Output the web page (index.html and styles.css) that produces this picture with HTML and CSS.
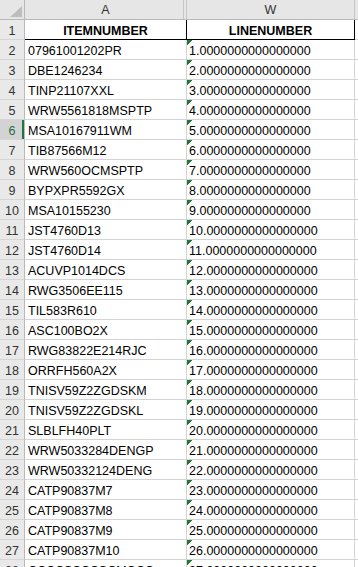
FILE: index.html
```html
<!DOCTYPE html>
<html>
<head>
<meta charset="utf-8">
<link rel="stylesheet" href="styles.css">
</head>
<body>
<div class="sheet">
  <div class="corner"><svg width="24" height="19" viewBox="0 0 24 19"><polygon points="22,6 22,17 10,17" fill="#bdbdbd"/></svg></div>
  <div class="ch ch-a">A</div>
  <div class="ch">W</div>
  <div class="ch ch-x"></div>

  <div class="rh">1</div><div class="c hd hd-a">ITEMNUMBER</div><div class="c hd hd-w">LINENUMBER</div><div class="c x"></div>
  <div class="rh">2</div><div class="c">07961001202PR</div><div class="c w">1.0000000000000000</div><div class="c x"></div>
  <div class="rh">3</div><div class="c">DBE1246234</div><div class="c w">2.0000000000000000</div><div class="c x"></div>
  <div class="rh">4</div><div class="c">TINP21107XXL</div><div class="c w">3.0000000000000000</div><div class="c x"></div>
  <div class="rh">5</div><div class="c">WRW5561818MSPTP</div><div class="c w">4.0000000000000000</div><div class="c x"></div>
  <div class="rh sel">6</div><div class="c">MSA10167911WM</div><div class="c w">5.0000000000000000</div><div class="c x"></div>
  <div class="rh">7</div><div class="c">TIB87566M12</div><div class="c w">6.0000000000000000</div><div class="c x"></div>
  <div class="rh">8</div><div class="c">WRW560OCMSPTP</div><div class="c w">7.0000000000000000</div><div class="c x"></div>
  <div class="rh">9</div><div class="c">BYPXPR5592GX</div><div class="c w">8.0000000000000000</div><div class="c x"></div>
  <div class="rh">10</div><div class="c">MSA10155230</div><div class="c w">9.0000000000000000</div><div class="c x"></div>
  <div class="rh">11</div><div class="c">JST4760D13</div><div class="c w">10.0000000000000000</div><div class="c x"></div>
  <div class="rh">12</div><div class="c">JST4760D14</div><div class="c w">11.0000000000000000</div><div class="c x"></div>
  <div class="rh">13</div><div class="c">ACUVP1014DCS</div><div class="c w">12.0000000000000000</div><div class="c x"></div>
  <div class="rh">14</div><div class="c">RWG3506EE115</div><div class="c w">13.0000000000000000</div><div class="c x"></div>
  <div class="rh">15</div><div class="c">TIL583R610</div><div class="c w">14.0000000000000000</div><div class="c x"></div>
  <div class="rh">16</div><div class="c">ASC100BO2X</div><div class="c w">15.0000000000000000</div><div class="c x"></div>
  <div class="rh">17</div><div class="c">RWG83822E214RJC</div><div class="c w">16.0000000000000000</div><div class="c x"></div>
  <div class="rh">18</div><div class="c">ORRFH560A2X</div><div class="c w">17.0000000000000000</div><div class="c x"></div>
  <div class="rh">19</div><div class="c">TNISV59Z2ZGDSKM</div><div class="c w">18.0000000000000000</div><div class="c x"></div>
  <div class="rh">20</div><div class="c">TNISV59Z2ZGDSKL</div><div class="c w">19.0000000000000000</div><div class="c x"></div>
  <div class="rh">21</div><div class="c">SLBLFH40PLT</div><div class="c w">20.0000000000000000</div><div class="c x"></div>
  <div class="rh">22</div><div class="c">WRW5033284DENGP</div><div class="c w">21.0000000000000000</div><div class="c x"></div>
  <div class="rh">23</div><div class="c">WRW50332124DENG</div><div class="c w">22.0000000000000000</div><div class="c x"></div>
  <div class="rh">24</div><div class="c">CATP90837M7</div><div class="c w">23.0000000000000000</div><div class="c x"></div>
  <div class="rh">25</div><div class="c">CATP90837M8</div><div class="c w">24.0000000000000000</div><div class="c x"></div>
  <div class="rh">26</div><div class="c">CATP90837M9</div><div class="c w">25.0000000000000000</div><div class="c x"></div>
  <div class="rh">27</div><div class="c">CATP90837M10</div><div class="c w">26.0000000000000000</div><div class="c x"></div>
  <div class="rh">28</div><div class="c">CCCCSSCCSCMCCC</div><div class="c w">27.0000000000000000</div><div class="c x"></div>
</div>
</body>
</html>
```

FILE: styles.css
```css
html, body {
  margin: 0;
  padding: 0;
  background: #ffffff;
  overflow: hidden;
}

.sheet {
  display: grid;
  grid-template-columns: 25px 162px 168px 1fr;
  grid-template-rows: 20px repeat(28, 20px);
  width: 358px;
  height: 567px;
  overflow: hidden;
  font-family: "Liberation Sans", Arial, sans-serif;
  font-size: 12.5px;
  line-height: 14px;
  color: #000;
}

.sheet > div {
  box-sizing: border-box;
  white-space: nowrap;
  overflow: hidden;
}

.corner {
  background: #e6e6e6;
  border-right: 1px solid #b9b9b9;
  border-bottom: 1px solid #b9b9b9;
}

.corner svg {
  display: block;
}

.ch {
  background: #e6e6e6;
  border-right: 1px solid #c6c6c6;
  border-bottom: 1px solid #b9b9b9;
  color: #333;
  display: flex;
  align-items: center;
  justify-content: center;
  padding-top: 1px;
}

.ch-a {
  background: linear-gradient(to left, transparent 2px, #c6c6c6 2px, #c6c6c6 3px, transparent 3px), #e6e6e6;
}

.ch-x {
  border-right: none;
}

.rh {
  background: #e9e9e9;
  border-right: 1px solid #b9b9b9;
  border-bottom: 1px solid #d6d6d6;
  color: #333;
  display: flex;
  align-items: flex-end;
  justify-content: center;
  padding-bottom: 1px;
}

.rh.sel {
  background: #d3d3d3;
  color: #1e6e42;
  box-shadow: inset -2px 0 0 #217346;
}

.c {
  border-right: 1px solid #d4d4d4;
  border-bottom: 1px solid #d4d4d4;
  display: flex;
  align-items: flex-end;
  padding: 0 0 1px 3px;
}

.c.x {
  border-right: none;
  padding: 0;
}

.c.hd {
  font-weight: bold;
  justify-content: center;
  padding-left: 0;
  border-bottom-color: #000;
  border-right-color: #000;
}

.c.w {
  padding-left: 2px;
  background: linear-gradient(135deg, #1e7a36 0, #1e7a36 3.6px, transparent 3.6px) no-repeat 0 0 / 6px 6px;
}
```
